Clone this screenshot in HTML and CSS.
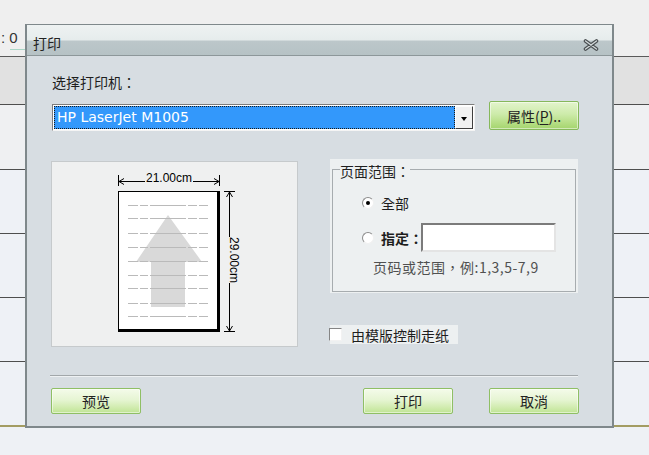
FILE: index.html
```html
<!DOCTYPE html>
<html lang="zh-CN">
<head>
<meta charset="utf-8">
<title>打印</title>
<link rel="stylesheet" href="styles.css">
</head>
<body>
<div class="screen">
  <div class="strip-top"><span class="val">: 0</span><span class="tick"></span></div>
  <div class="grid-row head"></div>
  <div class="grid-row first"></div>
  <div class="grid-row"></div>
  <div class="grid-row"></div>
  <div class="grid-row"></div>
  <div class="grid-row last"></div>
  <div class="grid-foot"></div>
</div>

<div class="dialog">
  <div class="titlebar">
    <span class="title">打印</span>
    <svg class="close" width="16" height="12" viewBox="0 0 16 12">
      <path d="M2.5 2 L13.5 10 M13.5 2 L2.5 10" stroke="#4a4f51" stroke-width="3.6" stroke-linecap="round"/>
      <path d="M2.5 2 L13.5 10 M13.5 2 L2.5 10" stroke="#d3dadc" stroke-width="1.3" stroke-linecap="round"/>
    </svg>
  </div>
  <div class="dbody">
    <div class="label">选择打印机：</div>
    <div class="printer-row">
      <div class="select">
        <div class="sel-val">HP LaserJet M1005</div>
        <div class="drop"><span class="tri"></span></div>
      </div>
      <button class="btn btn-prop">属性(<u>P</u>)..</button>
    </div>

    <div class="mid">
      <div class="preview">
        <svg width="245" height="184" viewBox="0 0 245 184">
          <rect x="66" y="29" width="102" height="141" fill="#000"/>
          <rect x="67" y="30" width="98" height="137" fill="#fff"/>
          <polygon points="116,53 150,100 133,100 133,145 99,145 99,100 84,100" fill="#d9d9d9"/>
          <g stroke="#bababa" stroke-width="1" stroke-dasharray="10 2 8 2 36 2 9 2 9">
            <line x1="76" y1="43.5" x2="156" y2="43.5"/>
            <line x1="76" y1="56.5" x2="156" y2="56.5"/>
            <line x1="76" y1="71.5" x2="156" y2="71.5"/>
            <line x1="76" y1="85.5" x2="156" y2="85.5"/>
            <line x1="76" y1="99.5" x2="156" y2="99.5"/>
            <line x1="76" y1="113.5" x2="156" y2="113.5"/>
            <line x1="76" y1="126.5" x2="156" y2="126.5"/>
            <line x1="76" y1="141.5" x2="156" y2="141.5"/>
            <line x1="76" y1="154.5" x2="156" y2="154.5"/>
          </g>
          <g stroke="#000" stroke-width="1" fill="none">
            <line x1="66.5" y1="13" x2="66.5" y2="24"/>
            <line x1="167.5" y1="13" x2="167.5" y2="24"/>
            <line x1="67" y1="19.5" x2="93" y2="19.5"/>
            <line x1="141" y1="19.5" x2="167" y2="19.5"/>
            <polyline points="72,16.5 67,19.5 72,22.5"/>
            <polyline points="162,16.5 167,19.5 162,22.5"/>
            <line x1="172" y1="29.5" x2="183" y2="29.5"/>
            <line x1="172" y1="169.5" x2="183" y2="169.5"/>
            <line x1="177.5" y1="30" x2="177.5" y2="75"/>
            <line x1="177.5" y1="121" x2="177.5" y2="169"/>
            <polyline points="174.5,35 177.5,30 180.5,35"/>
            <polyline points="174.5,164 177.5,169 180.5,164"/>
          </g>
          <text class="dim" x="117" y="19.5" text-anchor="middle">21.00cm</text>
          <text class="dim" transform="translate(182 98) rotate(90)" x="0" y="4" text-anchor="middle">29.00cm</text>
        </svg>
      </div>

      <div class="right">
        <div class="group">
          <fieldset class="frame">
            <legend>页面范围：</legend>
            <div class="opt opt-all">
              <span class="radio on"></span><span class="opt-text">全部</span>
            </div>
            <div class="opt opt-some">
              <span class="radio"></span><span class="opt-text bold">指定：</span><span class="range-input"></span>
            </div>
            <div class="hint">页码或范围，例:1,3,5-7,9</div>
          </fieldset>
        </div>
        <div class="chk-row"><span class="chk"></span><span>由模版控制走纸</span></div>
      </div>
    </div>

    <div class="sep"></div>

    <div class="btn-row">
      <button class="btn">预览</button>
      <button class="btn push">打印</button>
      <button class="btn">取消</button>
    </div>
  </div>
</div>
</body>
</html>
```

FILE: styles.css
```css
html, body {
  margin: 0;
  padding: 0;
}
body {
  width: 649px;
  height: 455px;
  overflow: hidden;
  position: relative;
  background: #eef1f5;
  font-family: "Noto Sans CJK TC", "Noto Sans CJK SC", "Liberation Sans", sans-serif;
  font-feature-settings: "locl" 0;
  color: #1e1e1e;
}

/* background table */
.screen {
  display: flex;
  flex-direction: column;
}
.strip-top {
  height: 57px;
  box-sizing: border-box;
  background: #efefef;
  border-bottom: 1px solid #5a5a5a;
  display: flex;
  align-items: flex-start;
  font-family: "Liberation Sans", sans-serif;
  font-size: 15px;
  color: #333;
}
.strip-top .val {
  margin-top: 29px;
  margin-left: 1px;
  line-height: 18px;
  white-space: pre;
}
.strip-top .tick {
  width: 15px;
  height: 1px;
  background: #a9d6c6;
  margin-top: 49px;
  margin-left: -8px;
}
.grid-row {
  height: 64px;
  box-sizing: border-box;
  background: #eef1f6;
  border-bottom: 1px solid #4e4e4e;
}
.grid-row.head {
  height: 48px;
  background: #e1e1e1;
}
.grid-row.first {
  height: 65px;
  background: #eff0f2;
}
.grid-row.last {
  height: 65px;
  border-bottom: 2px solid #a39c62;
}
.grid-foot {
  height: 27px;
  background: #eef1f5;
}

/* dialog */
.dialog {
  position: absolute;
  left: 25px;
  top: 24px;
  width: 589px;
  height: 404px;
  box-sizing: border-box;
  border: 2px solid #7f888b;
  border-top-width: 1px;
  background: #d7dde2;
  display: flex;
  flex-direction: column;
}
.titlebar {
  height: 31px;
  box-sizing: border-box;
  border-bottom: 1px solid #8d979a;
  background: linear-gradient(to bottom, #eef2f2 0, #e6ecec 15px, #bcc7ca 16px, #b6c2c5 100%);
  display: flex;
  align-items: flex-start;
  justify-content: space-between;
  padding: 10px 13px 0 6px;
}
.title {
  font-size: 14px;
  line-height: 16px;
  color: #222;
}
.close {
  margin-top: 4px;
  display: block;
}

.dbody {
  padding: 0 33px 0 24px;
  display: flex;
  flex-direction: column;
}
.label {
  margin-top: 17px;
  margin-left: 1px;
  font-size: 14px;
  line-height: 18px;
}
.printer-row {
  margin-top: 10px;
  display: flex;
  align-items: flex-start;
  gap: 14px;
}
.select {
  margin-left: 1px;
  margin-top: 3px;
  width: 423px;
  height: 27px;
  box-sizing: border-box;
  border: 1px solid;
  border-color: #7d7d7d #f4f4f4 #f4f4f4 #7d7d7d;
  background: #fff;
  padding: 1px;
  display: flex;
}
.sel-val {
  flex: 1;
  background: #3398fb;
  outline: 1px dotted #1a1a1a;
  outline-offset: -1px;
  color: #fff;
  font-family: "DejaVu Sans", sans-serif;
  font-size: 14px;
  line-height: 23px;
  padding-left: 3px;
  white-space: nowrap;
}
.drop {
  width: 18px;
  box-sizing: border-box;
  background: #f1f1f1;
  border: 1px solid;
  border-color: #fdfdfd #3f3f3f #3f3f3f #fdfdfd;
  display: flex;
  align-items: center;
  justify-content: center;
}
.tri {
  width: 0;
  height: 0;
  border-left: 3px solid transparent;
  border-right: 3px solid transparent;
  border-top: 4px solid #000;
  margin-top: 2px;
}

.btn {
  width: 90px;
  height: 26px;
  box-sizing: border-box;
  margin: 0;
  padding: 0;
  border: 1px solid #8fbf65;
  border-radius: 2px;
  background: linear-gradient(to bottom, #f4fbea 0, #e6f5d3 45%, #d2ecb1 75%, #bfe494 100%);
  box-shadow: inset 0 0 0 1px rgba(255,255,255,0.5);
  font-family: "Noto Sans CJK TC", "Noto Sans CJK SC", sans-serif;
  font-feature-settings: "locl" 0;
  font-size: 14px;
  line-height: 22px;
  color: #222;
  text-align: center;
}
.btn-prop {
  height: 29px;
  border-color: #86b85b;
  background: linear-gradient(to bottom, #e3f4cc 0, #cdebaa 45%, #b7df87 75%, #a4d56d 100%);
}
.btn-prop u {
  text-decoration-thickness: 1px;
  text-underline-offset: 2px;
}

.mid {
  margin-top: 28px;
  display: flex;
  align-items: flex-start;
  gap: 32px;
}
.preview {
  margin-top: 2px;
  width: 247px;
  height: 186px;
  box-sizing: border-box;
  border: 1px solid #c6cacc;
  background: #eff0f0;
}
.preview svg {
  display: block;
}
.dim {
  font-family: "Liberation Sans", sans-serif;
  font-size: 12px;
  fill: #000;
}

.right {
  width: 248px;
  display: flex;
  flex-direction: column;
}
.group {
  background: #edf0f1;
  padding: 0 2px 1px;
}
.frame {
  margin: 0;
  padding: 0 7px;
  height: 133px;
  box-sizing: border-box;
  border: 1px solid #a7acaf;
  min-width: 0;
}
.frame legend {
  padding: 4px 0 0;
  font-size: 14px;
  line-height: 16px;
}
.opt {
  display: flex;
  align-items: center;
  margin-left: 22px;
  font-size: 14px;
}
.opt-all {
  margin-top: 14px;
  height: 20px;
}
.opt-some {
  margin-top: 10px;
  height: 29px;
}
.radio {
  width: 12px;
  height: 12px;
  box-sizing: border-box;
  border-radius: 50%;
  border: 1px solid;
  border-color: #8c8c8c #f0f0f0 #f0f0f0 #8c8c8c;
  background: #fff;
  display: grid;
  place-items: center;
  margin-right: 7px;
}
.radio.on::after {
  content: "";
  width: 4px;
  height: 4px;
  border-radius: 50%;
  background: #000;
}
.opt-text.bold {
  font-weight: 700;
}
.range-input {
  width: 135px;
  height: 29px;
  box-sizing: border-box;
  border: 2px solid;
  border-color: #7b7b7b #e4e4e4 #e4e4e4 #7b7b7b;
  background: #fff;
  margin-left: -2px;
}
.hint {
  margin-top: 7px;
  margin-left: 33px;
  font-size: 14px;
  line-height: 16px;
  letter-spacing: 0.5px;
  color: #505050;
  white-space: nowrap;
}

.chk-row {
  margin-top: 32px;
  width: 128px;
  height: 19px;
  background: #edf0f1;
  display: flex;
  align-items: center;
  font-size: 14px;
  white-space: nowrap;
}
.chk {
  width: 13px;
  height: 13px;
  box-sizing: border-box;
  border: 1px solid;
  border-color: #858585 #f2f2f2 #f2f2f2 #858585;
  background: #fff;
  margin-left: -1px;
  margin-right: 9px;
}

.sep {
  margin: 28px 1px 0 -1px;
  height: 1px;
  background: #a2a7aa;
  border-bottom: 1px solid #eef1f3;
}
.btn-row {
  margin-top: 11px;
  display: flex;
  gap: 36px;
}
.btn-row .push {
  margin-left: auto;
}
```
